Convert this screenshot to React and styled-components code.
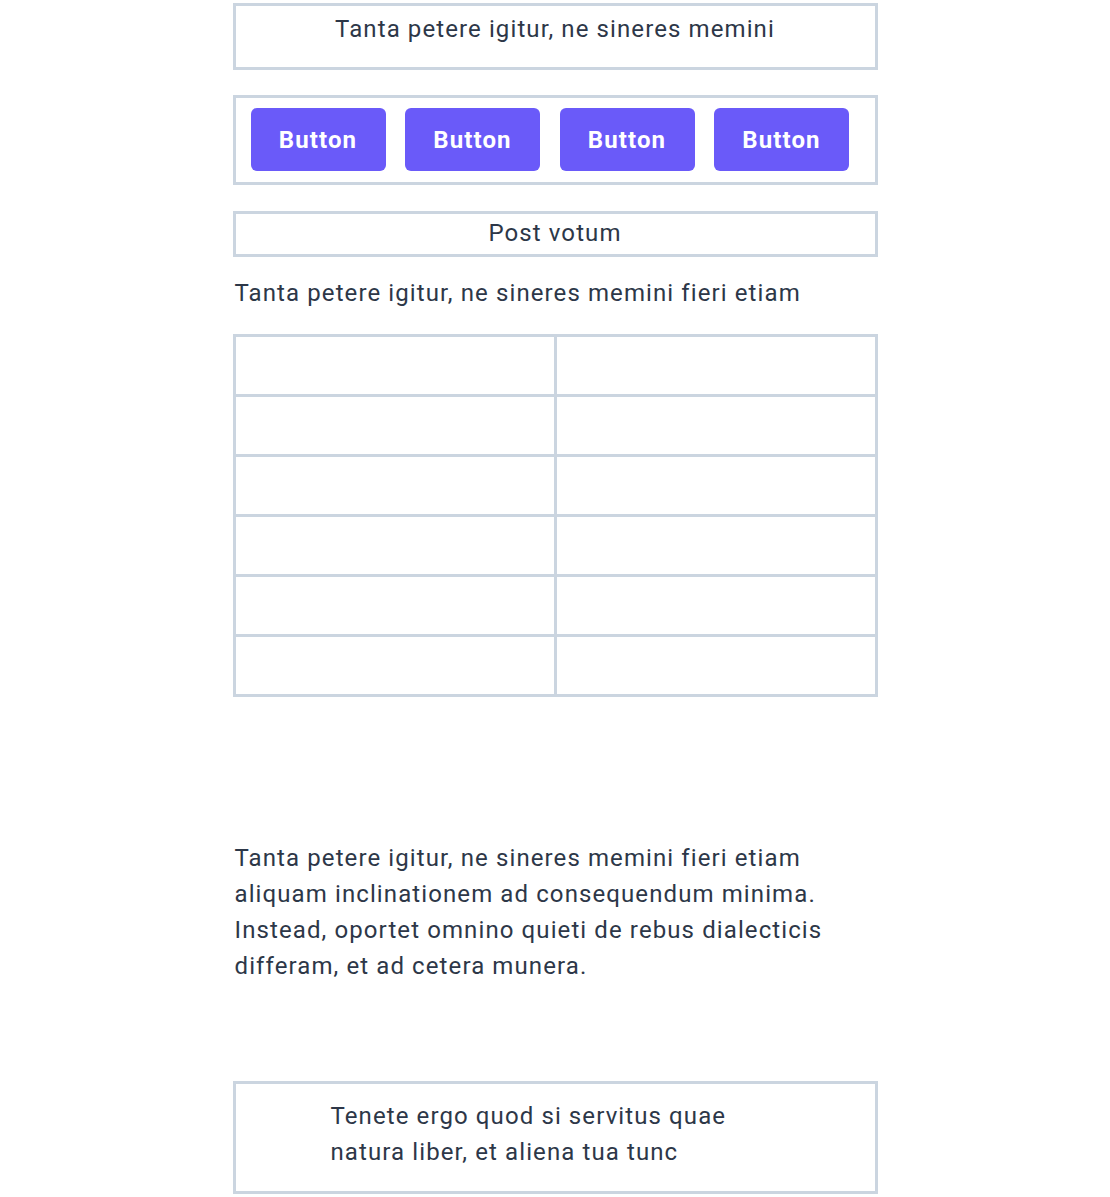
import React from "react";
import styled, { createGlobalStyle } from "styled-components";

const Global = createGlobalStyle`
  html, body { margin: 0; padding: 0; background: #ffffff; }
  body { font-family: "Roboto", "Liberation Sans", sans-serif; color: #2d3748; letter-spacing: 1.1px; }
`;

const Page = styled.div`
  width: 645px;
  margin: 0 auto;
  padding-top: 3px;
  display: flex;
  flex-direction: column;
`;

const Box = styled.div`
  border: 3px solid #cbd5e0;
  box-sizing: border-box;
  height: ${(p) => p.$h}px;
  margin-top: ${(p) => p.$mt || 0}px;
  padding: ${(p) => p.$pad || "0"};
  text-align: ${(p) => p.$align || "left"};
  font-size: 24px;
  line-height: 36px;
`;

const ButtonRow = styled.div`
  border: 3px solid #cbd5e0;
  box-sizing: border-box;
  height: 90px;
  margin-top: 25px;
  padding: 10px 15px;
  display: flex;
  gap: 19.5px;
`;

const Button = styled.button`
  width: 135px;
  height: 63px;
  border: none;
  border-radius: 6px;
  background: #6a5af9;
  color: #ffffff;
  font-family: inherit;
  letter-spacing: 1.1px;
  font-size: 24px;
  font-weight: 700;
  padding: 0;
  cursor: pointer;
`;

const Line = styled.p`
  margin: ${(p) => p.$m};
  font-size: 24px;
  line-height: 36px;
  padding-left: 2px;
`;

const Table = styled.table`
  border-collapse: collapse;
  width: 645px;
  margin-top: 23px;
  td {
    border: 3px solid #cbd5e0;
    height: 60px;
    padding: 0;
    box-sizing: border-box;
    width: 50%;
  }
`;

const Quote = styled.div`
  max-width: 400px;
`;

export default function App() {
  const rows = Array.from({ length: 6 });
  return (
    <>
      <Global />
      <Page>
        <Box $h={67} $align="center" $pad="5px 0 0">
          Tanta petere igitur, ne sineres memini
        </Box>
        <ButtonRow>
          <Button>Button</Button>
          <Button>Button</Button>
          <Button>Button</Button>
          <Button>Button</Button>
        </ButtonRow>
        <Box $h={46} $mt={26} $align="center" $pad="1px 0 0">
          Post votum
        </Box>
        <Line $m="18px 0 0">Tanta petere igitur, ne sineres memini fieri etiam</Line>
        <Table>
          <tbody>
            {rows.map((_, i) => (
              <tr key={i}>
                <td />
                <td />
              </tr>
            ))}
          </tbody>
        </Table>
        <Line $m="143px 0 0">
          Tanta petere igitur, ne sineres memini fieri etiam aliquam inclinationem ad
          consequendum minima. Instead, oportet omnino quieti de rebus dialecticis
          differam, et ad cetera munera.
        </Line>
        <Box $h={113} $mt={97} $pad="14px 0 0 95px">
          <Quote>Tenete ergo quod si servitus quae natura liber, et aliena tua tunc</Quote>
        </Box>
      </Page>
    </>
  );
}
